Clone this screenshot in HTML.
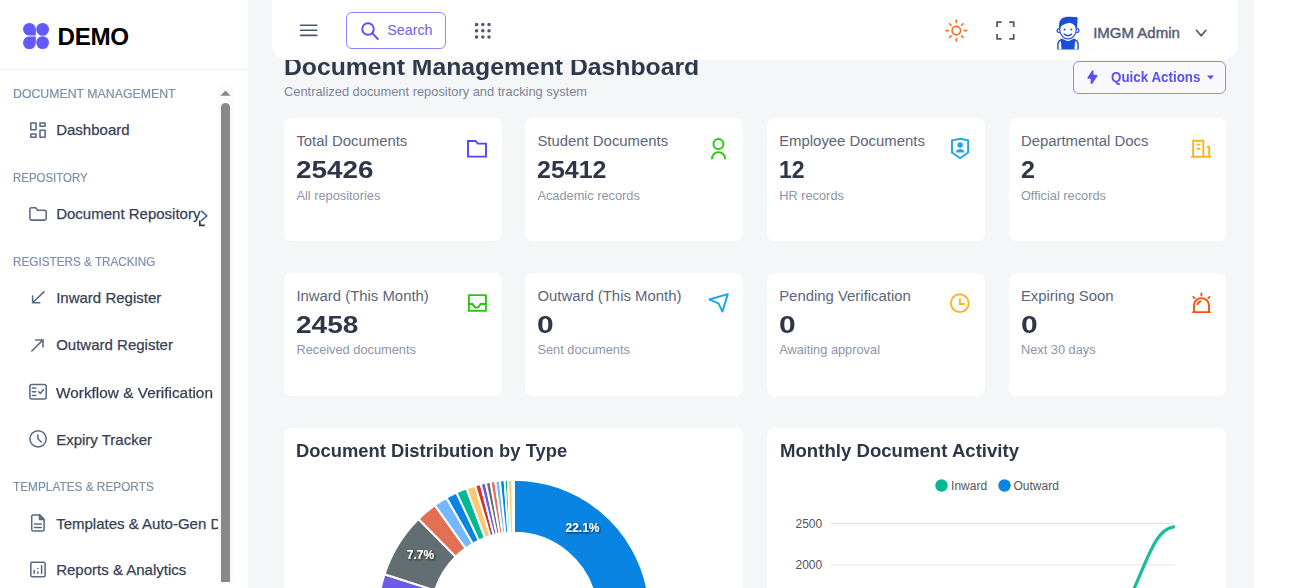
<!DOCTYPE html>
<html><head><meta charset="utf-8"><style>
html,body{margin:0;padding:0;width:1290px;height:588px;overflow:hidden;background:#fff;font-family:"Liberation Sans",sans-serif}
.t{position:absolute;line-height:1;white-space:nowrap}
</style></head><body>
<div style="position:absolute;left:0;top:0;width:248px;height:588px;background:#fff"></div>
<div style="position:absolute;left:0;top:69px;width:248px;height:1px;background:#edf1f9"></div>
<svg style="position:absolute;left:23px;top:23px" width="26" height="26" viewBox="0 0 26 26"><g fill="#6259ff"><path d="M6.4 0A6.4 6.4 0 0 1 12.8 6.4V12.6H6.4A6.3 6.3 0 0 1 6.4 0Z"/><circle cx="19.6" cy="6.4" r="6.4"/><path d="M6.4 13.4H12.8V19.6A6.4 6.4 0 1 1 6.4 13.4Z"/><circle cx="19.6" cy="19.6" r="6.4"/></g></svg>
<div class="t" style="left:57.50px;top:25.21px;font-size:24.2px;font-weight:700;color:#000;letter-spacing:-0.3px;">DEMO</div>
<div class="t" style="left:13.10px;top:88.27px;font-size:12.2px;font-weight:400;color:#7d8fab;transform:scaleX(1.01);transform-origin:0 0;-webkit-text-stroke:0.2px #7d8fab;">DOCUMENT MANAGEMENT</div>
<div class="t" style="left:13.10px;top:172.47px;font-size:12.2px;font-weight:400;color:#7d8fab;transform:scaleX(0.94);transform-origin:0 0;-webkit-text-stroke:0.2px #7d8fab;">REPOSITORY</div>
<div class="t" style="left:13.10px;top:256.47px;font-size:12.2px;font-weight:400;color:#7d8fab;transform:scaleX(0.962);transform-origin:0 0;-webkit-text-stroke:0.2px #7d8fab;">REGISTERS &amp; TRACKING</div>
<div class="t" style="left:13.10px;top:480.77px;font-size:12.2px;font-weight:400;color:#7d8fab;transform:scaleX(0.97);transform-origin:0 0;-webkit-text-stroke:0.2px #7d8fab;">TEMPLATES &amp; REPORTS</div>
<div style="position:absolute;left:0;top:0;width:218px;height:588px;overflow:hidden">
<div class="t" style="left:56.20px;top:121.70px;font-size:15px;font-weight:400;color:#374156;-webkit-text-stroke:0.25px #374156;">Dashboard</div>
<div class="t" style="left:56.20px;top:206.30px;font-size:15px;font-weight:400;color:#374156;-webkit-text-stroke:0.25px #374156;">Document Repository</div>
<div class="t" style="left:56.20px;top:290.30px;font-size:15px;font-weight:400;color:#374156;-webkit-text-stroke:0.25px #374156;">Inward Register</div>
<div class="t" style="left:56.20px;top:337.30px;font-size:15px;font-weight:400;color:#374156;-webkit-text-stroke:0.25px #374156;">Outward Register</div>
<div class="t" style="left:56.20px;top:384.60px;font-size:15px;font-weight:400;color:#374156;transform:scaleX(1.025);transform-origin:0 0;-webkit-text-stroke:0.25px #374156;">Workflow &amp; Verification</div>
<div class="t" style="left:56.20px;top:431.60px;font-size:15px;font-weight:400;color:#374156;-webkit-text-stroke:0.25px #374156;">Expiry Tracker</div>
<div class="t" style="left:56.20px;top:516.10px;font-size:15px;font-weight:400;color:#374156;-webkit-text-stroke:0.25px #374156;">Templates &amp; Auto-Gen Documents</div>
<div class="t" style="left:56.20px;top:561.60px;font-size:15px;font-weight:400;color:#374156;-webkit-text-stroke:0.25px #374156;">Reports &amp; Analytics</div>
</div>
<svg style="position:absolute;left:0;top:0" width="248" height="588" fill="none" stroke="#5a6a84" stroke-width="1.55" stroke-linecap="round" stroke-linejoin="round"><path d="M30.8 122.9H36V129.8H30.8Z M40 122.9H45.1V126.2H40Z M30.8 133.9H36V137.2H30.8Z M40 130.3H45.1V137.2H40Z"/><path d="M29.9 209.2A1.5 1.5 0 0 1 31.4 207.7H35.6L37.6 210.2H44.7A1.5 1.5 0 0 1 46.2 211.7V218.6A1.5 1.5 0 0 1 44.7 220.1H31.4A1.5 1.5 0 0 1 29.9 218.6Z"/><path d="M43.9 291.9L32.6 302.8M32.6 295.9V302.8H39.8"/><path d="M31.8 351L43 339.9M35.8 339.9H43V347"/><path d="M31.9 384.4H44.2A2 2 0 0 1 46.2 386.4V396.9A2 2 0 0 1 44.2 398.9H31.9A2 2 0 0 1 29.9 396.9V386.4A2 2 0 0 1 31.9 384.4Z M32.4 388H35.8M32.4 391.8H35.8M32.4 395.4H35.8 M38.6 391.8L40.3 393.4L43.5 389.6"/><circle cx="38.1" cy="438.8" r="8.15"/><path d="M37.9 435V438.8L41.2 442"/><path d="M39.5 514.9H33.2A1.5 1.5 0 0 0 31.7 516.4V529.4A1.5 1.5 0 0 0 33.2 530.9H42.6A1.5 1.5 0 0 0 44.1 529.4V519.5L39.5 514.9Z"/><path d="M39.5 514.9V519.5H44.1Z" fill="#5a6a84"/><path d="M34.5 523.9H41.3M34.5 527.5H41.3"/><path d="M32.3 562.2H43.6A1.5 1.5 0 0 1 45.1 563.7V575.2A1.5 1.5 0 0 1 43.6 576.7H32.3A1.5 1.5 0 0 1 30.8 575.2V563.7A1.5 1.5 0 0 1 32.3 562.2Z M34.2 570.4V573.3M37.9 568.4V568.6M37.9 571.9V573.3M41.6 565.8V573.3"/></svg>
<svg style="position:absolute;left:0;top:0" width="248" height="588" fill="none" stroke-width="1.7" stroke-linecap="round" stroke-linejoin="round"><path d="M201.6 211.2L206.9 215.8L201.6 220.4" stroke="#56698a"/><path d="M199.8 220.6V225.3H204.8" stroke="#2d3648" stroke-linecap="butt" stroke-linejoin="miter"/></svg>
<div style="position:absolute;left:218px;top:85px;width:15px;height:497px;background:#fafafa"></div>
<svg style="position:absolute;left:218px;top:85px" width="15" height="14"><path d="M2.4 10.7L7.5 5.4L12.6 10.7Z" fill="#8a8a8a"/></svg>
<div style="position:absolute;left:221px;top:103px;width:9px;height:479px;background:#888;border-radius:4.5px 4.5px 0 0"></div>
<div style="position:absolute;left:248px;top:0;width:1006px;height:588px;background:#f5f6f8"></div>
<div class="t" style="left:284.00px;top:54.78px;font-size:24.6px;font-weight:700;color:#2e394b;transform:scaleX(1.006);transform-origin:0 0;">Document Management Dashboard</div>
<div class="t" style="left:284.00px;top:86.31px;font-size:12.86px;font-weight:400;color:#7b8599;">Centralized document repository and tracking system</div>
<div style="position:absolute;left:1072.7px;top:61.3px;width:151px;height:30.5px;border:1px solid #8e85ff;border-radius:6px;background:#f9f9fd"></div>
<svg style="position:absolute;left:0;top:0" width="1290" height="100" fill="none" stroke="#5a4ff3" stroke-width="1.7" stroke-linecap="round" stroke-linejoin="round"><path d="M1092.6 71.2L1088.2 78H1091.6L1091.5 83.2L1096.6 75.7H1092.7Z" fill="#5a4ff3"/></svg>
<div class="t" style="left:1110.70px;top:70.21px;font-size:14.4px;font-weight:700;color:#5a4ff3;transform:scaleX(0.93);transform-origin:0 0;">Quick Actions</div>
<svg style="position:absolute;left:1206px;top:74px" width="9" height="7"><path d="M1 1.5h7L4.5 5.5Z" fill="#5a4ff3"/></svg>
<div style="position:absolute;left:272px;top:-20px;width:966px;height:80px;background:#fff;border-radius:0 0 16px 16px"></div>
<svg style="position:absolute;left:299px;top:20px" width="20" height="20" viewBox="0 0 20 20" stroke="#4a5670" stroke-width="1.6" stroke-linecap="round"><path d="M1.6 5.2h16.2M1.6 10.2h16.2M1.6 15.4h16.2"/></svg>
<div style="position:absolute;left:346px;top:11.5px;width:98px;height:35px;border:1px solid #8e85ff;border-radius:6px"></div>
<svg style="position:absolute;left:358px;top:18px" width="24" height="24" viewBox="0 0 24 24" fill="none" stroke="#5a4ff3" stroke-width="1.9" stroke-linecap="round"><circle cx="10" cy="11" r="5.8"/><path d="M14.2 15.2l5.6 5.8"/></svg>
<div class="t" style="left:387.20px;top:23.10px;font-size:14.3px;font-weight:400;color:#6a62f7;">Search</div>
<svg style="position:absolute;left:474.9px;top:22.8px" width="16" height="16" fill="#4f5b73"><circle cx="1.6" cy="1.6" r="1.75"/><circle cx="1.6" cy="7.800000000000001" r="1.75"/><circle cx="1.6" cy="14.0" r="1.75"/><circle cx="7.800000000000001" cy="1.6" r="1.75"/><circle cx="7.800000000000001" cy="7.800000000000001" r="1.75"/><circle cx="7.800000000000001" cy="14.0" r="1.75"/><circle cx="14.0" cy="1.6" r="1.75"/><circle cx="14.0" cy="7.800000000000001" r="1.75"/><circle cx="14.0" cy="14.0" r="1.75"/></svg>
<svg style="position:absolute;left:0;top:0" width="1290" height="588" fill="none"><circle cx="956.3" cy="30.6" r="4.25" stroke="#fd6b2b" stroke-width="1.6"/><path d="M956.30 22.60L956.30 20.30M961.60 25.30L963.16 23.74M964.30 30.60L966.60 30.60M961.60 35.90L963.16 37.46M956.30 38.60L956.30 40.90M951.00 35.90L949.44 37.46M948.30 30.60L946.00 30.60M951.00 25.30L949.44 23.74" stroke="#fd6b2b" stroke-width="1.6" stroke-linecap="round"/><path d="M997.1 27V22H1001.6M1009.2 22H1013.7V27M1013.7 33.9V38.9H1009.2M1001.6 38.9H997.1V33.9" stroke="#4d5972" stroke-width="1.75"/><path d="M1057.2 49.5V44.5C1057.2 41.5 1059.5 39.3 1062.5 38.6C1064 40 1066 40.6 1068 40.6S1072 40 1073.5 38.6C1076.5 39.3 1078.8 41.5 1078.8 44.5V49.5Z" fill="#1d4ed8"/><path d="M1058.6 49.2V44.8C1058.6 43 1059.4 41.8 1060.8 41.1L1061.6 49.2Z" fill="#fff"/><path d="M1077.4 49.2V44.8C1077.4 43 1076.6 41.8 1075.2 41.1L1074.4 49.2Z" fill="#fff"/><ellipse cx="1068" cy="39.6" rx="2.8" ry="1.3" fill="#fff"/><circle cx="1059" cy="30.6" r="1.9" fill="#fff" stroke="#1d4ed8" stroke-width="1.2"/><circle cx="1077" cy="30.6" r="1.9" fill="#fff" stroke="#1d4ed8" stroke-width="1.2"/><ellipse cx="1068" cy="29.4" rx="8.3" ry="9.4" fill="#fff" stroke="#1d4ed8" stroke-width="1.15"/><path d="M1059.3 29.5C1058.6 25 1059 21 1061.5 18.8C1063.3 17.3 1066 16.8 1069 16.8L1076.3 16.9C1078.1 17.3 1078.2 19.6 1077.1 20.4C1077.9 21.6 1077.6 23 1077.1 23.6L1077.3 29C1076.2 26.8 1073.6 23.8 1069.8 22.8C1066.8 23.4 1063.2 24.2 1060.8 26.6Z" fill="#1d4ed8"/><circle cx="1064.6" cy="29.4" r="1" fill="#1d4ed8"/><circle cx="1071.3" cy="29.4" r="1" fill="#1d4ed8"/><path d="M1064.1 34.1Q1067.9 37.4 1071.7 34.1" stroke="#1d4ed8" stroke-width="1.3" stroke-linecap="round"/><path d="M1196.5 30.3L1201.2 35.8L1205.9 30.3" stroke="#4a5670" stroke-width="1.7" stroke-linecap="round" stroke-linejoin="round"/></svg>
<div class="t" style="left:1093.20px;top:24.90px;font-size:15px;font-weight:400;color:#525d72;-webkit-text-stroke:0.45px #525d72;">IMGM Admin</div>
<div style="position:absolute;left:284px;top:118.4px;width:217.8px;height:122.7px;background:#fff;border-radius:8px"></div>
<div class="t" style="left:296.40px;top:134.09px;font-size:14.9px;font-weight:400;color:#5b667a;">Total Documents</div>
<div class="t" style="left:296.40px;top:158.28px;font-size:24px;font-weight:700;color:#2d3748;transform:scaleX(1.16);transform-origin:0 0;">25426</div>
<div class="t" style="left:296.40px;top:189.66px;font-size:12.8px;font-weight:400;color:#8b95a8;">All repositories</div>
<div style="position:absolute;left:525px;top:118.4px;width:217.8px;height:122.7px;background:#fff;border-radius:8px"></div>
<div class="t" style="left:537.40px;top:134.09px;font-size:14.9px;font-weight:400;color:#5b667a;">Student Documents</div>
<div class="t" style="left:537.40px;top:158.28px;font-size:24px;font-weight:700;color:#2d3748;transform:scaleX(1.04);transform-origin:0 0;">25412</div>
<div class="t" style="left:537.40px;top:189.66px;font-size:12.8px;font-weight:400;color:#8b95a8;">Academic records</div>
<div style="position:absolute;left:766.8px;top:118.4px;width:217.8px;height:122.7px;background:#fff;border-radius:8px"></div>
<div class="t" style="left:779.20px;top:134.09px;font-size:14.9px;font-weight:400;color:#5b667a;">Employee Documents</div>
<div class="t" style="left:779.20px;top:158.28px;font-size:24px;font-weight:700;color:#2d3748;transform:scaleX(0.96);transform-origin:0 0;">12</div>
<div class="t" style="left:779.20px;top:189.66px;font-size:12.8px;font-weight:400;color:#8b95a8;">HR records</div>
<div style="position:absolute;left:1008.5px;top:118.4px;width:217.8px;height:122.7px;background:#fff;border-radius:8px"></div>
<div class="t" style="left:1020.90px;top:134.09px;font-size:14.9px;font-weight:400;color:#5b667a;">Departmental Docs</div>
<div class="t" style="left:1020.90px;top:158.28px;font-size:24px;font-weight:700;color:#2d3748;transform:scaleX(1.05);transform-origin:0 0;">2</div>
<div class="t" style="left:1020.90px;top:189.66px;font-size:12.8px;font-weight:400;color:#8b95a8;">Official records</div>
<div style="position:absolute;left:284px;top:273.0px;width:217.8px;height:122.7px;background:#fff;border-radius:8px"></div>
<div class="t" style="left:296.40px;top:288.69px;font-size:14.9px;font-weight:400;color:#5b667a;">Inward (This Month)</div>
<div class="t" style="left:296.40px;top:312.88px;font-size:24px;font-weight:700;color:#2d3748;transform:scaleX(1.17);transform-origin:0 0;">2458</div>
<div class="t" style="left:296.40px;top:344.26px;font-size:12.8px;font-weight:400;color:#8b95a8;">Received documents</div>
<div style="position:absolute;left:525px;top:273.0px;width:217.8px;height:122.7px;background:#fff;border-radius:8px"></div>
<div class="t" style="left:537.40px;top:288.69px;font-size:14.9px;font-weight:400;color:#5b667a;">Outward (This Month)</div>
<div class="t" style="left:537.40px;top:312.88px;font-size:24px;font-weight:700;color:#2d3748;transform:scaleX(1.25);transform-origin:0 0;">0</div>
<div class="t" style="left:537.40px;top:344.26px;font-size:12.8px;font-weight:400;color:#8b95a8;">Sent documents</div>
<div style="position:absolute;left:766.8px;top:273.0px;width:217.8px;height:122.7px;background:#fff;border-radius:8px"></div>
<div class="t" style="left:779.20px;top:288.69px;font-size:14.9px;font-weight:400;color:#5b667a;">Pending Verification</div>
<div class="t" style="left:779.20px;top:312.88px;font-size:24px;font-weight:700;color:#2d3748;transform:scaleX(1.25);transform-origin:0 0;">0</div>
<div class="t" style="left:779.20px;top:344.26px;font-size:12.8px;font-weight:400;color:#8b95a8;">Awaiting approval</div>
<div style="position:absolute;left:1008.5px;top:273.0px;width:217.8px;height:122.7px;background:#fff;border-radius:8px"></div>
<div class="t" style="left:1020.90px;top:288.69px;font-size:14.9px;font-weight:400;color:#5b667a;">Expiring Soon</div>
<div class="t" style="left:1020.90px;top:312.88px;font-size:24px;font-weight:700;color:#2d3748;transform:scaleX(1.25);transform-origin:0 0;">0</div>
<div class="t" style="left:1020.90px;top:344.26px;font-size:12.8px;font-weight:400;color:#8b95a8;">Next 30 days</div>
<svg style="position:absolute;left:0;top:0" width="1290" height="588" fill="none" stroke-width="1.9" stroke-linejoin="miter"><path d="M468 141H475.6L477.8 143.6H486V156.6H468Z" stroke="#5046ff"/><circle cx="718.4" cy="144" r="5" stroke="#27c80b"/><path d="M712 158.6A6.5 6.5 0 0 1 725 158.6" stroke="#27c80b" stroke-linecap="round"/><path d="M952 140.4L960.1 138.8L968.1 140.4V152.5L960.1 158.2L952 152.5Z" stroke="#1ba5ef"/><circle cx="960.1" cy="145" r="2.7" fill="#1ba5ef"/><path d="M955.7 152.6C956 150.2 957.8 149 960.1 149S964.2 150.2 964.6 152.6Z" fill="#1ba5ef"/><path d="M1191 156.8H1211.5M1193.1 156.8V140.7H1203.3V156.8M1206.8 147H1209.2V156.8M1196.6 144.6H1200.4M1196.6 148.8H1200.4" stroke="#ffb41c"/><path d="M468.9 295.1H485.9V310.9H468.9Z" stroke="#27c80b" stroke-linejoin="round"/><path d="M468.9 304H472.6C474 307 475.3 307.6 476.6 307.6S479.2 307 480.6 304H485.9" stroke="#27c80b"/><path d="M727.8 294.1L722.4 311.6L718.5 303.4L709.3 299.5Z" stroke="#1ba5ef" stroke-linejoin="round"/><circle cx="959.8" cy="303.2" r="8.9" stroke="#ffb41c"/><path d="M959.9 298.5V304H964.6" stroke="#ffb41c"/><path d="M1194 311V305.6A7.5 7.5 0 0 1 1209 305.6V311M1193 312.1H1210M1197.6 304.2A4 4 0 0 1 1200.6 301.2M1201.4 293.4V295.6M1193.3 297L1194.4 298.1M1209.4 297L1208.3 298.1" stroke="#ff500f" stroke-linecap="round"/></svg>
<div style="position:absolute;left:284px;top:428.2px;width:459px;height:200px;background:#fff;border-radius:8px"></div>
<div style="position:absolute;left:767px;top:428.2px;width:459px;height:200px;background:#fff;border-radius:8px"></div>
<div class="t" style="left:296.40px;top:441.12px;font-size:19px;font-weight:700;color:#2d3748;transform:scaleX(0.967);transform-origin:0 0;">Document Distribution by Type</div>
<div class="t" style="left:779.50px;top:441.32px;font-size:19px;font-weight:700;color:#2d3748;transform:scaleX(0.979);transform-origin:0 0;">Monthly Document Activity</div>
<svg style="position:absolute;left:0;top:0" width="1290" height="588"><g stroke="#fff" stroke-width="2" stroke-linejoin="round"><path d="M386.20 662.31A136.0 136.0 0 0 1 384.51 574.23L434.97 590.43A83.0 83.0 0 0 0 436.01 644.19Z" fill="#6c5ce7"/>
<path d="M384.51 574.23A136.0 136.0 0 0 1 418.51 518.96L455.72 556.70A83.0 83.0 0 0 0 434.97 590.43Z" fill="#636e72"/>
<path d="M418.51 518.96A136.0 136.0 0 0 1 434.83 505.22L465.68 548.31A83.0 83.0 0 0 0 455.72 556.70Z" fill="#e17055"/>
<path d="M434.83 505.22A136.0 136.0 0 0 1 446.49 497.74L472.80 543.75A83.0 83.0 0 0 0 465.68 548.31Z" fill="#74b9ff"/>
<path d="M446.49 497.74A136.0 136.0 0 0 1 456.48 492.56L478.90 540.59A83.0 83.0 0 0 0 472.80 543.75Z" fill="#0984e3"/>
<path d="M456.48 492.56A136.0 136.0 0 0 1 466.46 488.38L484.99 538.04A83.0 83.0 0 0 0 478.90 540.59Z" fill="#00b894"/>
<path d="M466.46 488.38A136.0 136.0 0 0 1 475.21 485.45L490.33 536.25A83.0 83.0 0 0 0 484.99 538.04Z" fill="#fdcb6e"/>
<path d="M475.21 485.45A136.0 136.0 0 0 1 480.75 483.93L493.71 535.32A83.0 83.0 0 0 0 490.33 536.25Z" fill="#d63031"/>
<path d="M480.75 483.93A136.0 136.0 0 0 1 485.79 482.76L496.79 534.60A83.0 83.0 0 0 0 493.71 535.32Z" fill="#6c5ce7"/>
<path d="M485.79 482.76A136.0 136.0 0 0 1 490.52 481.84L499.67 534.05A83.0 83.0 0 0 0 496.79 534.60Z" fill="#636e72"/>
<path d="M490.52 481.84A136.0 136.0 0 0 1 495.26 481.10L502.56 533.59A83.0 83.0 0 0 0 499.67 534.05Z" fill="#e17055"/>
<path d="M495.26 481.10A136.0 136.0 0 0 1 499.90 480.53L505.40 533.25A83.0 83.0 0 0 0 502.56 533.59Z" fill="#74b9ff"/>
<path d="M499.90 480.53A136.0 136.0 0 0 1 504.63 480.12L508.28 533.00A83.0 83.0 0 0 0 505.40 533.25Z" fill="#0984e3"/>
<path d="M504.63 480.12A136.0 136.0 0 0 1 507.95 479.93L510.31 532.88A83.0 83.0 0 0 0 508.28 533.00Z" fill="#00b894"/>
<path d="M507.95 479.93A136.0 136.0 0 0 1 512.48 479.81L513.07 532.81A83.0 83.0 0 0 0 510.31 532.88Z" fill="#fdcb6e"/>
<path d="M512.48 479.81A136.0 136.0 0 0 1 514.00 479.80L514.00 532.80A83.0 83.0 0 0 0 513.07 532.81Z" fill="#d63031"/>
<path d="M514.00 479.80A136.0 136.0 0 0 1 647.75 591.16L595.63 600.76A83.0 83.0 0 0 0 514.00 532.80Z" fill="#0984e3"/>
<path d="M647.75 591.16A136.0 136.0 0 0 1 386.20 662.31L436.01 644.19A83.0 83.0 0 0 0 595.63 600.76Z" fill="#00b894"/>
</g>
<g font-family="Liberation Sans" font-weight="700" font-size="12" fill="#fff" text-anchor="middle" style="paint-order:stroke"><text x="582.5" y="531.5" stroke="#333" stroke-width="0" filter="url(#sh)">22.1%</text><text x="420.5" y="558.5" filter="url(#sh)">7.7%</text></g>
<defs><filter id="sh" x="-50%" y="-50%" width="200%" height="200%"><feDropShadow dx="1" dy="1" stdDeviation="1" flood-color="#000" flood-opacity="0.8"/></filter></defs>
<line x1="830.5" y1="523.4" x2="1174.5" y2="523.4" stroke="#e4e4e4" stroke-width="1.2"/>
<line x1="830.5" y1="565" x2="1174.5" y2="565" stroke="#e4e4e4" stroke-width="1.2"/>
<path d="M1126 606.5L1128.99 600C1148.66 557.35 1155.38 529.43 1173.6 526.9" fill="none" stroke="#1abc9c" stroke-width="3.2" stroke-linecap="round"/>
<circle cx="941.5" cy="485.5" r="6.2" fill="#00b894"/><circle cx="1004.5" cy="485.5" r="6.2" fill="#0984e3"/>
<g font-family="Liberation Sans" font-size="12" fill="#555"><text x="795.5" y="528.2">2500</text><text x="795.5" y="569">2000</text></g>
<g font-family="Liberation Sans" font-size="12" fill="#555"><text x="951.1" y="489.5">Inward</text><text x="1013.5" y="489.5">Outward</text></g>
</svg>
</body></html>
